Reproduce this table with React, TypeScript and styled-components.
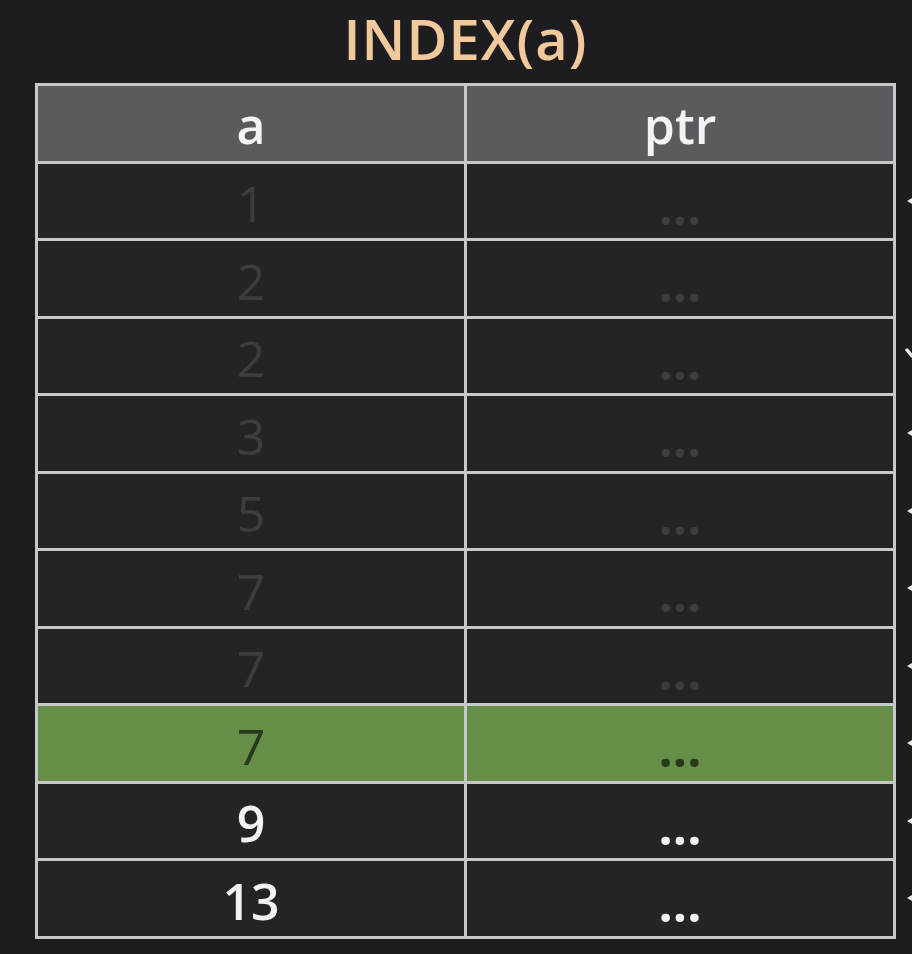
import styled, { createGlobalStyle } from "styled-components";

type Row = { a: string; state: "faded" | "hit" | "live"; marker: "dot" | "slash" | "none" };

const rows: Row[] = [
  { a: "1", state: "faded", marker: "dot" },
  { a: "2", state: "faded", marker: "none" },
  { a: "2", state: "faded", marker: "slash" },
  { a: "3", state: "faded", marker: "dot" },
  { a: "5", state: "faded", marker: "dot" },
  { a: "7", state: "faded", marker: "dot" },
  { a: "7", state: "faded", marker: "dot" },
  { a: "7", state: "hit", marker: "dot" },
  { a: "9", state: "live", marker: "dot" },
  { a: "13", state: "live", marker: "dot" },
];

export default function App() {
  return (
    <>
      <GlobalStyle />
      <Page>
        <Title>INDEX(a)</Title>
        <Body>
          <Table>
            <HeadCell>a</HeadCell>
            <HeadCell>ptr</HeadCell>
            {rows.map((r, i) => (
              <RowPair key={i} row={r} />
            ))}
          </Table>
          <Markers>
            <MarkerSlot />
            {rows.map((r, i) => (
              <MarkerSlot key={i}>
                {r.marker === "dot" ? (
                  <svg width="16" height="16" viewBox="0 0 16 16">
                    <path d="M11 8 L16 5 L16 11 Z" fill="#e8e8e8" />
                  </svg>
                ) : r.marker === "slash" ? (
                  <svg width="16" height="16" viewBox="0 0 16 16">
                    <path d="M11 2 L16 8" stroke="#e8e8e8" strokeWidth="3.5" strokeLinecap="round" />
                  </svg>
                ) : null}
              </MarkerSlot>
            ))}
          </Markers>
        </Body>
      </Page>
    </>
  );
}

function RowPair({ row }: { row: Row }) {
  return (
    <>
      <Cell $state={row.state}>{row.a}</Cell>
      <Cell $state={row.state} $ptr>
        ...
      </Cell>
    </>
  );
}

const GlobalStyle = createGlobalStyle`
  body {
    margin: 0;
    background: #1d1c1f;
    font-family: "Open Sans", "Noto Sans", sans-serif;
  }
`;

const Page = styled.div`
  width: 912px;
  height: 954px;
  overflow: hidden;
  padding-left: 35px;
  box-sizing: border-box;
`;

const Title = styled.div`
  width: 861px;
  height: 83px;
  text-align: center;
  font-size: 56px;
  font-weight: 600;
  line-height: normal;
  color: #f2c99a;
  letter-spacing: 1px;
`;

const Body = styled.div`
  display: flex;
`;

const Table = styled.div`
  width: 861px;
  display: grid;
  grid-template-columns: 1fr 1fr;
  grid-auto-rows: 74.5px;
  gap: 3px;
  padding: 3px;
  box-sizing: border-box;
  background: #c8c8c8;
`;

const HeadCell = styled.div`
  background: #5c5a5f;
  color: #f4f4f4;
  font-size: 50px;
  font-weight: 600;
  line-height: 1;
  display: flex;
  justify-content: center;
  align-items: center;
  padding-top: 4px;
  box-sizing: border-box;
`;

const textColor = {
  faded: "#3d3c40",
  hit: "#27391d",
  live: "#f2f2f2",
};

const Cell = styled.div<{ $state: Row["state"]; $ptr?: boolean }>`
  background: ${(p) => (p.$state === "hit" ? "#668e46" : "#242326")};
  color: ${(p) => textColor[p.$state]};
  font-size: 50px;
  line-height: 1;
  display: flex;
  justify-content: center;
  align-items: center;
  padding-top: ${(p) => (p.$ptr ? "10px" : "5px")};
  box-sizing: border-box;
  font-weight: ${(p) => (p.$ptr ? 700 : p.$state === "live" ? 600 : 400)};
`;

const Markers = styled.div`
  display: flex;
  flex-direction: column;
  padding-top: 3px;
  gap: 3px;
`;

const MarkerSlot = styled.div`
  width: 16px;
  height: 74.5px;
  display: flex;
  align-items: center;
  justify-content: flex-end;
`;
